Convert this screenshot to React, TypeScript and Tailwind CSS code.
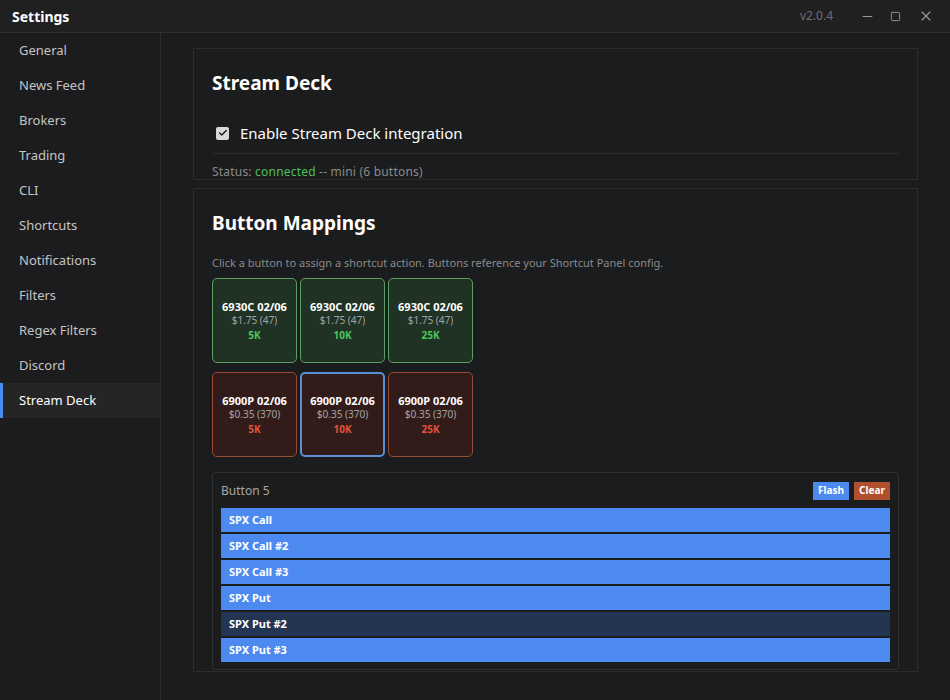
import { Minus, Square, X, Check } from 'lucide-react';

const navItems = [
  'General',
  'News Feed',
  'Brokers',
  'Trading',
  'CLI',
  'Shortcuts',
  'Notifications',
  'Filters',
  'Regex Filters',
  'Discord',
  'Stream Deck',
];

type DeckButton = {
  label: string;
  price: string;
  size: string;
  side: 'call' | 'put';
  selected?: boolean;
};

const deckButtons: DeckButton[] = [
  { label: '6930C 02/06', price: '$1.75 (47)', size: '5K', side: 'call' },
  { label: '6930C 02/06', price: '$1.75 (47)', size: '10K', side: 'call' },
  { label: '6930C 02/06', price: '$1.75 (47)', size: '25K', side: 'call' },
  { label: '6900P 02/06', price: '$0.35 (370)', size: '5K', side: 'put' },
  { label: '6900P 02/06', price: '$0.35 (370)', size: '10K', side: 'put', selected: true },
  { label: '6900P 02/06', price: '$0.35 (370)', size: '25K', side: 'put' },
];

const shortcuts = [
  { name: 'SPX Call' },
  { name: 'SPX Call #2' },
  { name: 'SPX Call #3' },
  { name: 'SPX Put' },
  { name: 'SPX Put #2', active: true },
  { name: 'SPX Put #3' },
];

function DeckKey({ b }: { b: DeckButton }) {
  const isCall = b.side === 'call';
  const border = b.selected
    ? 'border-2 border-[#5b8fd9]'
    : isCall
      ? 'border border-[#5c9e63]'
      : 'border border-[#9c4a36]';
  return (
    <div
      className={`w-[85px] h-[85px] rounded-[5px] flex flex-col items-center justify-center ${border} ${
        isCall ? 'bg-[#203224]' : 'bg-[#321c1a]'
      }`}
    >
      <div className="text-[11px] leading-[14px] font-bold text-white">{b.label}</div>
      <div className="text-[10px] leading-[13px] text-[#a3a3a3]">{b.price}</div>
      <div className={`text-[10px] leading-[13px] font-bold mt-[2px] ${isCall ? 'text-[#4fc35e]' : 'text-[#e2523a]'}`}>
        {b.size}
      </div>
    </div>
  );
}

export default function App() {
  return (
    <div
      className="w-[950px] h-[700px] flex flex-col bg-[#1b1c1e] text-[#d0d0d0] overflow-hidden"
      style={{ fontFamily: '"Noto Sans", "DejaVu Sans", sans-serif' }}
    >
      {/* title bar */}
      <div className="h-[33px] shrink-0 flex items-center bg-[#202020] border-b border-[#2e2e2e] pl-[12px] pr-[16px]">
        <div className="text-[14px] font-bold text-white">Settings</div>
        <div className="ml-auto flex items-center">
          <span className="text-[12px] text-[#6f6f6f] mr-[27px]">v2.0.4</span>
          <Minus size={15} strokeWidth={1.6} className="text-[#9a9a9a] mr-[15px]" />
          <Square size={11} strokeWidth={2} className="text-[#9a9a9a] mr-[17px]" />
          <X size={16} strokeWidth={1.6} className="text-[#9a9a9a]" />
        </div>
      </div>

      <div className="flex flex-1 min-h-0">
        {/* sidebar */}
        <div className="w-[161px] shrink-0 bg-[#1c1c1e] border-r border-[#2a2a2a]">
          {navItems.map((item) => {
            const active = item === 'Stream Deck';
            return (
              <div
                key={item}
                className={`h-[35px] flex items-center text-[13px] pl-[16px] border-l-[3px] ${
                  active ? 'bg-[#252526] border-[#4d8af0] text-white' : 'border-transparent text-[#c4c4c4]'
                }`}
              >
                {item}
              </div>
            );
          })}
        </div>

        {/* main */}
        <div className="flex-1 min-w-0 pl-[32px] pr-[32px] pt-[15px] flex flex-col gap-[8px]">
          <div className="border border-[#2c2c2c] px-[18px] pt-[20px]">
            <div className="text-[19px] font-bold text-white leading-[28px]">Stream Deck</div>
            <div className="flex items-center mt-[25px] pl-[4px] pb-[8px] border-b border-[#2c2c2c]">
              <div className="w-[13px] h-[13px] rounded-[2px] bg-[#d9d9d9] flex items-center justify-center">
                <Check size={10} strokeWidth={3.5} className="text-[#1b1c1e]" />
              </div>
              <span className="ml-[11px] text-[15px] text-white">Enable Stream Deck integration</span>
            </div>
            <div className="text-[12px] text-[#8a8a8a] leading-[15px] mt-[10px] tracking-[0.2px]">
              Status: <span className="text-[#4fbf5c]">connected</span> -- mini (6 buttons)
            </div>
          </div>

          <div className="border border-[#2c2c2c] px-[18px] pt-[20px] flex-1 min-h-0">
            <div className="text-[19px] font-bold text-white leading-[28px]">Button Mappings</div>
            <div className="text-[11px] text-[#8a8a8a] mt-[18px]">
              Click a button to assign a shortcut action. Buttons reference your Shortcut Panel config.
            </div>
            <div className="grid grid-cols-[85px_85px_85px] gap-x-[3px] gap-y-[9px] mt-[7px]">
              {deckButtons.map((b, i) => (
                <DeckKey key={i} b={b} />
              ))}
            </div>

            <div className="mt-[15px] border border-[#303030] rounded-[3px] bg-[#1b1c1e] px-[8px] pt-[8px] pb-[7px]">
              <div className="flex items-center h-[19px]">
                <span className="text-[12px] text-[#a8a8a8]">Button 5</span>
                <div className="ml-auto flex gap-[5px]">
                  <button className="h-[18px] w-[36px] bg-[#4d8af0] text-white text-[10px] font-bold">Flash</button>
                  <button className="h-[18px] w-[36px] bg-[#b0502f] text-white text-[10px] font-bold">Clear</button>
                </div>
              </div>
              <div className="mt-[8px] flex flex-col gap-[2px]">
                {shortcuts.map((s) => (
                  <div
                    key={s.name}
                    className={`h-[24px] flex items-center pl-[8px] text-[11px] font-bold text-white ${
                      s.active ? 'bg-[#243553]' : 'bg-[#4d8af0]'
                    }`}
                  >
                    {s.name}
                  </div>
                ))}
              </div>
            </div>
          </div>
          <div className="h-[20px] shrink-0" />
        </div>
      </div>
    </div>
  );
}
